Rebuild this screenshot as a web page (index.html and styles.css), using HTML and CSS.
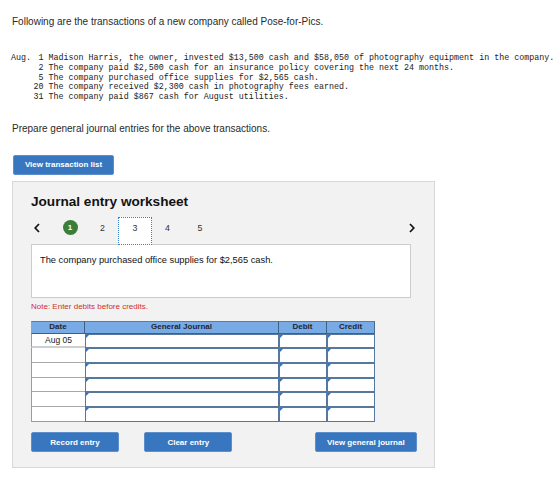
FILE: index.html
```html
<!DOCTYPE html>
<html lang="en">
<head>
<meta charset="utf-8">
<title>Journal entry worksheet</title>
<link rel="stylesheet" href="styles.css">
</head>
<body>
<main class="page">
  <p class="intro">Following are the transactions of a new company called Pose-for-Pics.</p>

  <div class="txns">
    <div class="txn"><span class="mon">Aug.</span><span class="line"> 1 Madison Harris, the owner, invested $13,500 cash and $58,050 of photography equipment in the company.</span></div>
    <div class="txn"><span class="mon"></span><span class="line"> 2 The company paid $2,500 cash for an insurance policy covering the next 24 months.</span></div>
    <div class="txn"><span class="mon"></span><span class="line"> 5 The company purchased office supplies for $2,565 cash.</span></div>
    <div class="txn"><span class="mon"></span><span class="line">20 The company received $2,300 cash in photography fees earned.</span></div>
    <div class="txn"><span class="mon"></span><span class="line">31 The company paid $867 cash for August utilities.</span></div>
  </div>

  <p class="intro prepare">Prepare general journal entries for the above transactions.</p>

  <button class="btn btn-list" type="button">View transaction list</button>

  <section class="worksheet">
    <h2 class="ws-title">Journal entry worksheet</h2>

    <div class="pager">
      <span class="nav prev"><svg width="6" height="10" viewBox="0 0 6 10"><polyline points="5,1 1.2,5 5,9" fill="none" stroke="#111" stroke-width="1.7"/></svg></span>
      <span class="step"><span class="done">1</span></span>
      <span class="step">2</span>
      <span class="step active">3</span>
      <span class="step">4</span>
      <span class="step">5</span>
      <span class="nav next"><svg width="6" height="10" viewBox="0 0 6 10"><polyline points="1,1 4.8,5 1,9" fill="none" stroke="#111" stroke-width="1.7"/></svg></span>
    </div>

    <div class="prompt">The company purchased office supplies for $2,565 cash.</div>

    <p class="note">Note: Enter debits before credits.</p>

    <div class="journal">
      <div class="th th-date">Date</div>
      <div class="th">General Journal</div>
      <div class="th">Debit</div>
      <div class="th th-last">Credit</div>

      <div class="date first">Aug 05</div><div class="inp"></div><div class="inp"></div><div class="inp"></div>
      <div class="date"></div><div class="inp"></div><div class="inp"></div><div class="inp"></div>
      <div class="date"></div><div class="inp"></div><div class="inp"></div><div class="inp"></div>
      <div class="date"></div><div class="inp"></div><div class="inp"></div><div class="inp"></div>
      <div class="date"></div><div class="inp"></div><div class="inp"></div><div class="inp"></div>
      <div class="date last"></div><div class="inp"></div><div class="inp"></div><div class="inp"></div>
    </div>

    <div class="actions">
      <button class="btn btn-act" type="button">Record entry</button>
      <button class="btn btn-act btn-clear" type="button">Clear entry</button>
      <button class="btn btn-view" type="button">View general journal</button>
    </div>
  </section>
</main>
</body>
</html>
```

FILE: styles.css
```css
* { box-sizing: border-box; }

body {
  margin: 0;
  background: #ffffff;
  color: #222222;
  font-family: "Liberation Sans", Arial, sans-serif;
}

.page {
  padding: 0 12px;
  width: 560px;
}

.intro {
  margin: 15px 0 0;
  font-size: 10px;
  line-height: 14px;
  color: #2a2a2a;
}

.txns {
  margin: 25px -12px 0 -1px;
  font-family: "Liberation Mono", "Courier New", monospace;
  font-size: 8.35px;
  line-height: 9.8px;
  color: #222;
}

.txn { white-space: pre; }
.mon { display: inline-block; width: 22.5px; }

.prepare { margin-top: 19px; }

.btn {
  font-family: "Liberation Sans", Arial, sans-serif;
  font-weight: bold;
  font-size: 8px;
  color: #ffffff;
  background: #3876c0;
  border: 1px solid #5d8fcc;
  border-radius: 2px;
  padding: 0;
  cursor: pointer;
}

.btn-list {
  display: block;
  margin-top: 19px;
  margin-left: 1px;
  width: 101px;
  height: 20px;
}

.worksheet {
  margin-top: 6px;
  width: 423px;
  background: #f2f2f2;
  border: 1px solid #d8d8d8;
  padding: 12px 17px 14.5px 18px;
}

.ws-title {
  margin: 0;
  font-size: 13.6px;
  line-height: 16px;
  font-weight: bold;
  color: #111;
}

.pager {
  margin-top: 7px;
  height: 26.6px;
  display: flex;
  align-items: flex-start;
  position: relative;
  z-index: 1;
}

.nav {
  display: flex;
  align-items: center;
  height: 22px;
}
.prev { width: 22.75px; padding-left: 3px; }
.next { margin-left: auto; margin-right: 2px; }

.step {
  width: 32.5px;
  height: 22px;
  display: flex;
  align-items: center;
  justify-content: center;
  font-size: 8.8px;
  color: #333;
}

.done {
  width: 15px;
  height: 15px;
  border-radius: 50%;
  background: #3b7e3b;
  color: #fff;
  font-weight: bold;
  font-size: 8px;
  display: flex;
  align-items: center;
  justify-content: center;
}

.step.active {
  width: 34.5px;
  margin: 0 -1px;
  height: 28.3px;
  padding-bottom: 6px;
  background: #ffffff;
  border: 1px dotted #3c7dcc;
}

.prompt {
  width: 380px;
  height: 54px;
  background: #ffffff;
  border: 1px solid #cccccc;
  padding: 9px 0 0 8px;
  font-size: 9.3px;
  line-height: 12px;
  color: #111;
}

.note {
  margin: 4.4px 0 0;
  font-size: 8px;
  line-height: 10px;
  color: #d0302f;
}

.journal {
  margin-top: 9px;
  display: grid;
  grid-template-columns: 54px 194px 48px 48px;
  grid-template-rows: 12.7px repeat(6, 14.7px);
  width: 344px;
}

.th {
  background: #78abe6;
  border-top: 1px solid #5a7ca3;
  border-right: 1px solid #3f5f85;
  border-bottom: 1px solid #3f5f85;
  font-weight: bold;
  font-size: 8px;
  line-height: 10.7px;
  text-align: center;
  color: #1e2633;
}
.th-date { border-left: 1px solid #8aa5c4; }
.th-last { border-right: 1.5px solid #4a6a90; }

.date {
  background: #ffffff;
  border-left: 1px solid #9c9c9c;
  border-bottom: 1px solid #a8a8a8;
  font-size: 8.5px;
  line-height: 13px;
  text-align: center;
  color: #222;
}
.date.first { border-bottom: 2px solid #cfcfcf; }
.date.last { border-bottom: 1.5px solid #9c9c9c; }

.inp {
  position: relative;
  background: #ffffff;
  border: 1px solid #56789f;
}
.inp::before {
  content: "";
  position: absolute;
  left: 0;
  top: 0;
  border-top: 3px solid #2f73c6;
  border-right: 3px solid transparent;
}

.actions {
  margin-top: 10px;
  display: flex;
}

.btn-act { width: 88px; height: 20.6px; }
.btn-clear { margin-left: 25.3px; }
.btn-view { margin-left: auto; width: 102.3px; height: 20.6px; }
```
